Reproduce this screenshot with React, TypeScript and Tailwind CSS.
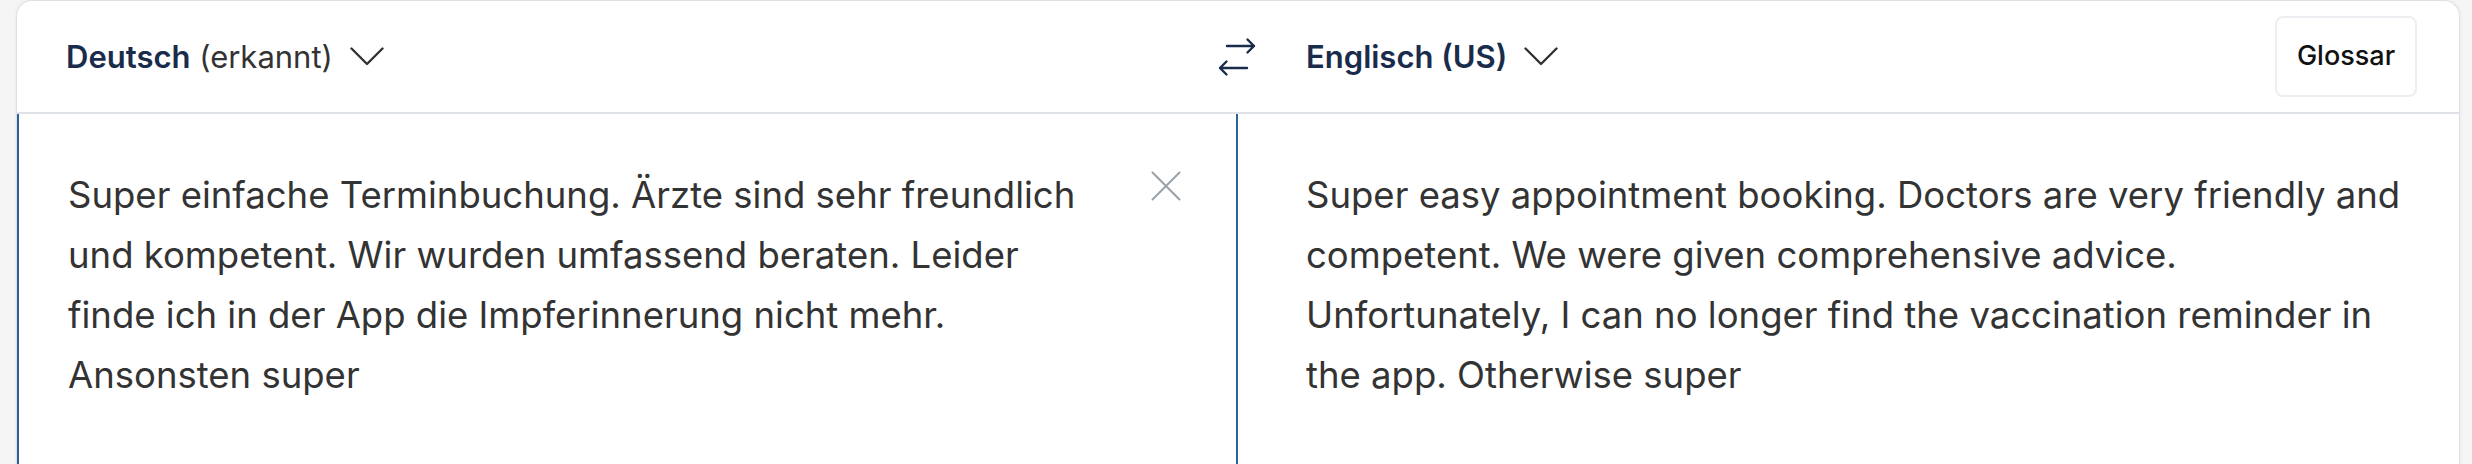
const source =
  'Super einfache Terminbuchung. Ärzte sind sehr freundlich und kompetent. Wir wurden umfassend beraten. Leider finde ich in der App die Impferinnerung nicht mehr. Ansonsten super';

const target =
  'Super easy appointment booking. Doctors are very friendly and competent. We were given comprehensive advice. Unfortunately, I can no longer find the vaccination reminder in the app. Otherwise super';

function Chevron() {
  return (
    <svg width="34" height="19" viewBox="0 0 34 19" fill="none" className="text-[#333]">
      <path d="M1.5 1.5 17 17 32.5 1.5" stroke="currentColor" strokeWidth="2.4" strokeLinecap="round" strokeLinejoin="round" />
    </svg>
  );
}

function SwapIcon() {
  return (
    <svg width="40" height="40" viewBox="0 0 40 40" fill="none">
      <path d="M10 9H37M30.5 2.5 37 9l-6.5 6.5" stroke="currentColor" strokeWidth="2.4" strokeLinecap="round" strokeLinejoin="round" />
      <path d="M30 31H3M9.5 24.5 3 31l6.5 6.5" stroke="currentColor" strokeWidth="2.4" strokeLinecap="round" strokeLinejoin="round" />
    </svg>
  );
}

function CloseIcon() {
  return (
    <svg width="30" height="30" viewBox="0 0 30 30" fill="none">
      <path d="M1.5 1.5 28.5 28.5M28.5 1.5 1.5 28.5" stroke="currentColor" strokeWidth="2" strokeLinecap="round" />
    </svg>
  );
}

export default function App() {
  return (
    <div className="min-h-screen bg-[#f5f5f5] pl-4 pr-3 font-['Inter',sans-serif]">
      <div className="bg-white border border-[#dde1e6] border-b-0 rounded-t-[16px] shadow-[0_0_4px_rgba(0,0,0,0.06)] overflow-hidden">
        {/* language bar */}
        <div className="grid grid-cols-2 h-[113px] border-b-2 border-[#dfe3e8]">
          <div className="flex items-center pl-[49px]">
            <button className="flex items-center gap-[17px] text-[31px] leading-none">
              <span>
                <span className="font-semibold text-[#1a2c4b]">Deutsch</span>{' '}
                <span className="text-[#333]">(erkannt)</span>
              </span>
              <Chevron />
            </button>
          </div>
          <div className="flex items-center pr-[42px]">
            <button className="-ml-[21px] w-[40px] h-[40px] flex items-center justify-center text-[#1a2c4b]">
              <SwapIcon />
            </button>
            <button className="ml-[49px] flex items-center gap-[17px] text-[31px] leading-none">
              <span className="font-semibold text-[#1a2c4b]">Englisch (US)</span>
              <Chevron />
            </button>
            <button className="ml-auto h-[81px] w-[142px] rounded-[8px] border-2 border-[#eceef1] text-[27px] font-medium text-[#111]">
              Glossar
            </button>
          </div>
        </div>

        {/* text panes */}
        <div className="grid grid-cols-2 h-[360px]">
          <div className="flex border-2 border-t-0 border-[#2b6297] pl-[49px] pr-[55px] pt-[51px]">
            <p className="w-[1030px] text-[36.5px] leading-[60px] text-[#333]">{source}</p>
            <button className="ml-auto mt-[6px] h-[30px] w-[30px] text-[#9aa1a9]">
              <CloseIcon />
            </button>
          </div>
          <div className="pl-[68px] pr-[44px] pt-[51px]">
            <p className="text-[36.5px] leading-[60px] text-[#333]">{target}</p>
          </div>
        </div>
      </div>
    </div>
  );
}
